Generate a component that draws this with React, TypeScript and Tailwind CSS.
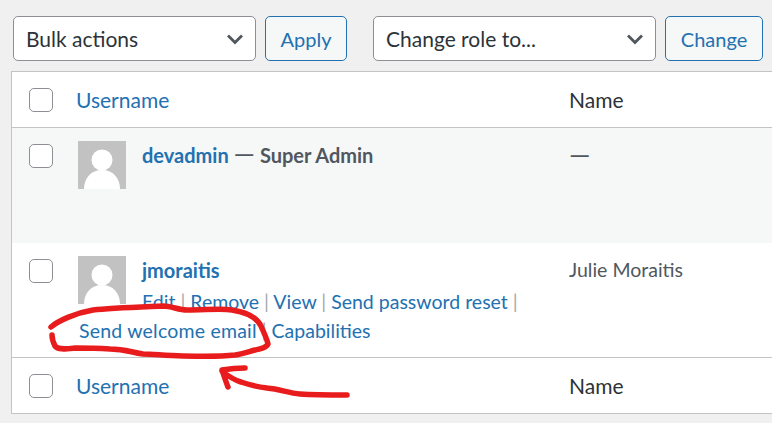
const font = { fontFamily: 'Lato, "Open Sans", sans-serif' }

function Check() {
  return <span className="block w-6 h-6 shrink-0 rounded-[5px] border border-[#8c8f94] bg-white" />
}

function Avatar() {
  return (
    <svg width="48" height="48" viewBox="0 0 48 48" className="shrink-0 block">
      <rect width="48" height="48" fill="#c2c2c2" />
      <circle cx="24" cy="19" r="10.5" fill="#fff" />
      <path d="M6 48C6 37 13 29 24 29S42 37 42 48z" fill="#fff" />
    </svg>
  )
}

function Chevron() {
  return (
    <svg width="18" height="12" viewBox="0 0 18 12" className="shrink-0">
      <path d="M2 2.5L9 9.5l7-7" fill="none" stroke="#50575e" strokeWidth="2.8" />
    </svg>
  )
}

function Select({ label, width }: { label: string; width: string }) {
  return (
    <div className={`${width} h-[45px] shrink-0 flex items-center justify-between pl-[12px] pr-[11px] bg-white border border-[#8c8f94] rounded-[5px] text-[#2c3338]`}>
      <span>{label}</span>
      <Chevron />
    </div>
  )
}

function Button({ label, width }: { label: string; width: string }) {
  return (
    <div className={`${width} h-[45px] shrink-0 flex items-center justify-center bg-[#f6f7f7] border border-[#2271b1] rounded-[5px] text-[20px] text-[#2271b1]`}>
      {label}
    </div>
  )
}

function HeadRow() {
  return (
    <div className="h-[55px] flex items-center">
      <div className="w-[64px] pl-[17px]">
        <Check />
      </div>
      <div className="w-[493px] text-[#2271b1]">Username</div>
      <div className="text-[#2c3338]">Name</div>
    </div>
  )
}

export default function App() {
  return (
    <div style={font} className="relative w-[772px] h-[423px] overflow-hidden bg-[#f0f0f1] text-[21px] leading-[28px]">
      <div className="flex pt-4 pl-[13px] h-[71px]">
        <Select label="Bulk actions" width="w-[243px]" />
        <div className="w-[9px] shrink-0" />
        <Button label="Apply" width="w-[82px]" />
        <div className="w-[26px] shrink-0" />
        <Select label="Change role to..." width="w-[283px]" />
        <div className="w-[9px] shrink-0" />
        <Button label="Change" width="w-[98px]" />
      </div>

      {/* users table */}
      <div className="ml-[11px] h-[343px] border border-r-0 border-[#c3c4c7] bg-white">
        <HeadRow />
        <div className="h-[116px] flex border-t border-[#c3c4c7] bg-[#f6f7f7]">
          <div className="w-[64px] pl-[17px] pt-[16px]">
            <Check />
          </div>
          <div className="w-[493px] flex pt-[13px] pl-[2px]">
            <Avatar />
            <div className="ml-4 -mt-[2px] font-bold text-[#50575e] text-[20px]">
              <span className="text-[#2271b1]">devadmin</span> <span className="text-[27px] leading-none font-normal">—</span> Super Admin
            </div>
          </div>
          <div className="pt-[12px] text-[#50575e] text-[27px] leading-[28px]">—</div>
        </div>
        <div className="h-[114px] flex">
          <div className="w-[64px] pl-[17px] pt-[16px]">
            <Check />
          </div>
          <div className="w-[493px] flex pt-[13px] pl-[2px]">
            <Avatar />
            <div className="ml-4">
              <div className="font-bold text-[#2271b1] text-[20px]">jmoraitis</div>
              <div className="mt-[3px] text-[19.5px] leading-[29px] text-[#a7aaad] whitespace-nowrap">
                <span className="text-[#2271b1]">Edit</span> | <span className="text-[#2271b1]">Remove</span> | <span className="text-[#2271b1]">View</span> | <span className="text-[#2271b1]">Send password reset</span> |
              </div>
              <div className="-ml-[63px] text-[19.5px] leading-[29px] text-[#a7aaad] whitespace-nowrap">
                <span className="text-[#2271b1] tracking-[0.2px]">Send welcome email</span> | <span className="text-[#2271b1]">Capabilities</span>
              </div>
            </div>
          </div>
          <div className="pt-[13px] text-[19.5px] text-[#50575e]">Julie Moraitis</div>
        </div>
        <div className="border-t border-[#c3c4c7]">
          <HeadRow />
        </div>
      </div>

      {/* hand-drawn annotation */}
      <svg width="772" height="423" viewBox="0 0 772 423" className="absolute left-0 top-0 pointer-events-none">
        <path
          d="M51 327C58 321 75 313 93 310C110 308 140 307 163 306C172 306 178 310 187 310C205 310 222 308 232 310C245 312 256 316 261 326C264 333 267 339 268 344C266 348 260 349 255 350C248 352 243 354 235 355C215 357 200 356 183 356C165 356 155 354 143 354C130 352 125 349 110 349C95 348 85 348 75 348C65 349 58 350 55 346C53 342 52 338 52 335"
          fill="none" stroke="#e81c1c" strokeWidth="5.5" strokeLinecap="round" strokeLinejoin="round"
        />
        <path
          d="M245 368C236 368 228 369 222 370C224 376 226 382 228 387M222 371C228 376 234 380 241 382C250 385 258 387 267 388C280 389 288 393 300 394C315 395 330 395 347 395"
          fill="none" stroke="#e81c1c" strokeWidth="5.5" strokeLinecap="round" strokeLinejoin="round"
        />
      </svg>
    </div>
  )
}
